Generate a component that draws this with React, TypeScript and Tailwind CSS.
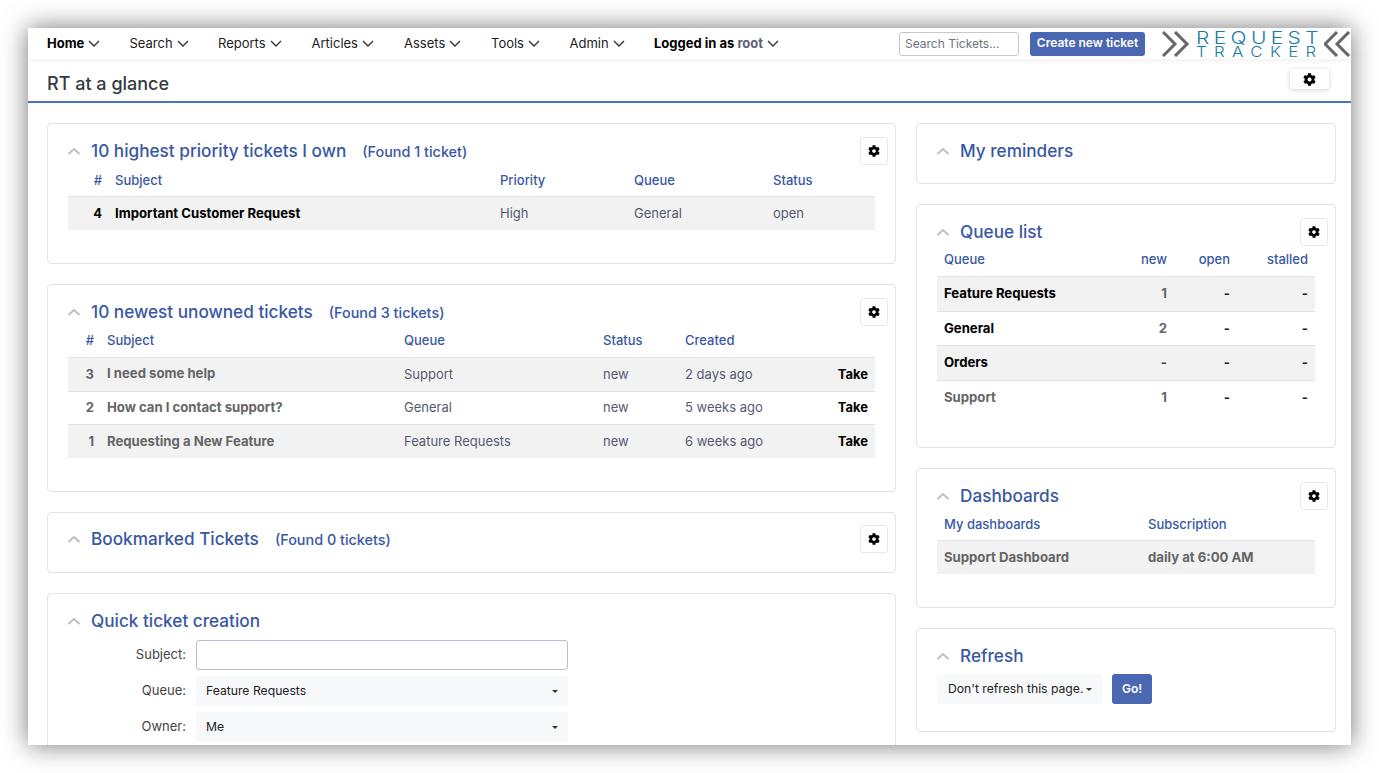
import React from "react";
import { FaCog } from "react-icons/fa";

const Caret = ({ c = "#000" }: { c?: string }) => (
  <svg width="6" height="3" viewBox="0 0 6 3" className="inline-block shrink-0"><path d="M0 0h6L3 3z" fill={c} /></svg>
);
const Chev = () => (
  <svg width="12" height="7" viewBox="0 0 12 7" fill="none" stroke="#333" strokeWidth="1.4" className="ml-[4px]"><path d="M1 1l5 5 5-5" /></svg>
);
const Up = () => (
  <svg width="12" height="7" viewBox="0 0 12 7" fill="none" stroke="#bdc0c8" strokeWidth="2"><path d="M0.5 6l5.5-5 5.5 5" /></svg>
);
const Gear = () => (
  <button className="flex h-[28px] w-[28px] items-center justify-center rounded-[3px] border border-[#e6e8ee] bg-white text-black">
    <FaCog className="h-[12px] w-[12px]" />
  </button>
);
const Card = ({ title, found, gear, raised, className, children }: { title: string; found?: string; gear?: boolean; raised?: boolean; className: string; children?: React.ReactNode }) => (
  <section className={"relative flex flex-col rounded-[4px] border border-[#dfe3ec] bg-white px-[20px] " + className}>
    <div className={(raised ? "h-[52px] " : "h-[54px] ") + "-mb-[7px] flex shrink-0 items-center"}>
      <Up />
      <h2 className="ml-[11px] text-[17.2px] font-medium leading-[24px] text-[#3858a3]">{title}</h2>
      {found && <span className="relative top-[1px] ml-[16px] text-[14.4px] font-medium text-[#3858a3]">{found}</span>}
    </div>
    {gear && <div className={(raised ? "top-[12px] " : "top-[13px] ") + "absolute right-[7px]"}><Gear /></div>}
    {children}
  </section>
);
const Cell = ({ className, children }: { className?: string; children?: React.ReactNode }) => <div className={className}>{children}</div>;

export default function App() {
  return (
    <div className="h-[773px] w-[1379px] overflow-hidden bg-white pl-[28px] pt-[28px] text-[13px] text-[#555b6e]" style={{ fontFamily: "Inter, sans-serif" }}>
      <div className="h-[717px] w-[1323px] overflow-hidden bg-white shadow-[0_0_24px_rgba(0,0,0,0.55)]">
        <nav className="relative z-10 flex h-[31px] items-center bg-white pl-[19px] text-[13px] text-[#222] shadow-[0_1px_6px_rgba(0,0,0,0.08)]">
          <span className="flex w-[82.5px] items-center font-bold text-black">Home<Chev /></span>
          <span className="flex w-[88.5px] items-center">Search<Chev /></span>
          <span className="flex w-[93.5px] items-center">Reports<Chev /></span>
          <span className="flex w-[92.5px] items-center">Articles<Chev /></span>
          <span className="flex w-[87px] items-center">Assets<Chev /></span>
          <span className="flex w-[78.5px] items-center">Tools<Chev /></span>
          <span className="flex w-[84.5px] items-center">Admin<Chev /></span>
          <span className="flex items-center font-bold text-black">Logged in as&nbsp;<span className="text-[#5c6278]">root</span><Chev /></span>
          <div className="ml-auto flex h-[24px] w-[120px] items-center rounded-[3px] border border-[#c3c7d3] bg-white px-[5px] text-[12px] text-[#6c757d]">Search Tickets...</div>
          <button className="ml-[11px] h-[24px] w-[115px] rounded-[3px] bg-[#4a67b1] pb-[1px] text-[12px] font-semibold text-white">Create new ticket</button>
          <div className="ml-[17px] flex h-[31px] w-[189px] shrink-0 items-center">
            <svg width="28" height="26" viewBox="0 0 28 26" fill="none" stroke="#666" strokeWidth="3" className="shrink-0"><path d="M1 1l12 12L1 25M13 1l12 12-12 12" /></svg>
            <div className="ml-[6px] w-[122px] shrink-0 whitespace-nowrap font-light text-[#1c7aa8]">
              <div className="h-[14px] origin-left scale-x-[1.2] text-[17.5px] leading-[14px] tracking-[3.65px]">REQUEST</div>
              <div className="mt-[1px] h-[11px] origin-left scale-x-[1.2] text-[14px] leading-[11px] tracking-[6.15px]">TRACKER</div>
            </div>
            <svg width="28" height="26" viewBox="0 0 28 26" fill="none" stroke="#666" strokeWidth="3" className="ml-[6px] shrink-0"><path d="M13 1L1 13l12 12M25 1L13 13l12 12" /></svg>
          </div>
        </nav>
        <header className="relative flex h-[44px] items-center border-b-2 border-[#4a72c4] pl-[19px] text-[18px] font-medium text-[#343a40]">
          <span className="relative top-[3px]">RT at a glance</span>
          <button className="absolute right-[22px] top-[10px] flex h-[20px] w-[39px] items-center justify-center rounded-b-[3px] bg-white text-black shadow-[0_1px_5px_rgba(40,50,80,0.22)]"><FaCog className="h-[13px] w-[13px]" /></button>
        </header>
        <main className="flex items-start gap-[20px] pl-[19px] pt-[20px]">
          <div className="flex w-[849px] shrink-0 flex-col gap-[20px]">
            <Card title="10 highest priority tickets I own" found="(Found 1 ticket)" gear className="h-[141px]">
              <div className="grid h-[18px] grid-cols-[47px_385px_134px_139px_1fr] items-center font-medium text-[#3858a3]">
                <Cell className="pr-[13px] text-right">#</Cell><Cell>Subject</Cell><Cell>Priority</Cell><Cell>Queue</Cell><Cell>Status</Cell>
              </div>
              <div className="mt-[7px] grid h-[34px] grid-cols-[47px_385px_134px_139px_1fr] items-center border-t border-[#dfe3ec] bg-[#f2f2f2]">
                <Cell className="pr-[13px] text-right font-bold text-black">4</Cell><Cell className="text-[13.15px] font-bold text-black">Important Customer Request</Cell><Cell>High</Cell><Cell>General</Cell><Cell>open</Cell>
              </div>
            </Card>
            <Card title="10 newest unowned tickets" found="(Found 3 tickets)" gear className="h-[208px]">
              <div className="-mt-[1px] grid h-[18px] grid-cols-[39px_297px_199px_82px_1fr] items-center font-medium text-[#3858a3]">
                <Cell className="pr-[13px] text-right">#</Cell><Cell>Subject</Cell><Cell>Queue</Cell><Cell>Status</Cell><Cell>Created</Cell>
              </div>
              <div className="mt-[8px]">
                {[
                  ["3", "I need some help", "Support", "2 days ago", "bg-[#f2f2f2]"],
                  ["2", "How can I contact support?", "General", "5 weeks ago", "bg-white"],
                  ["1", "Requesting a New Feature", "Feature Requests", "6 weeks ago", "bg-[#f2f2f2]"],
                ].map((r) => (
                  <div key={r[0]} className={"grid h-[33.6px] grid-cols-[39px_297px_199px_82px_1fr_auto] items-center border-t border-[#dfe3ec] " + r[4]}>
                    <Cell className="pr-[13px] text-right font-bold text-[#666]">{r[0]}</Cell><Cell className="text-[13.15px] font-bold text-[#666]">{r[1]}</Cell><Cell>{r[2]}</Cell><Cell>new</Cell><Cell>{r[3]}</Cell><Cell className="pr-[7px] font-bold text-black">Take</Cell>
                  </div>
                ))}
              </div>
            </Card>
            <Card title="Bookmarked Tickets" found="(Found 0 tickets)" gear raised className="h-[61px]" />
            <Card title="Quick ticket creation" className="h-[200px]">
              <div className="-mt-[1px] flex flex-col">
                <div className="flex items-center"><span className="w-[128px] pr-[10px] text-right text-[#444]">Subject:</span><div className="h-[30px] w-[372px] rounded-[3px] border border-[#b9bfd0] bg-white" /></div>
                <div className="mt-[6px] flex items-center"><span className="w-[128px] pr-[10px] text-right text-[#444]">Queue:</span><div className="flex h-[30px] w-[372px] items-center justify-between rounded-[3px] bg-[#f7f8fa] px-[10px] text-[12.2px] text-[#222]">Feature Requests<Caret c="#333" /></div></div>
                <div className="mt-[6px] flex items-center"><span className="w-[128px] pr-[10px] text-right text-[#444]">Owner:</span><div className="flex h-[30px] w-[372px] items-center justify-between rounded-[3px] bg-[#f7f8fa] px-[10px] text-[12.2px] text-[#222]">Me<Caret c="#333" /></div></div>
              </div>
            </Card>
          </div>
          <div className="flex w-[420px] shrink-0 flex-col gap-[20px]">
            <Card title="My reminders" className="h-[61px]" />
            <Card title="Queue list" gear className="h-[244px]">
              <div className="-mt-[2px] grid h-[18px] grid-cols-[1fr_70px_63px_78px] items-center px-[7px] font-medium text-[#3858a3]">
                <Cell>Queue</Cell><Cell className="text-right">new</Cell><Cell className="text-right">open</Cell><Cell className="text-right">stalled</Cell>
              </div>
              <div className="mt-[8px]">
                {[
                  ["Feature Requests", "1", "-", "-", "bg-[#f2f2f2] text-black", "text-[#666]"],
                  ["General", "2", "-", "-", "bg-white text-black", "text-[#666]"],
                  ["Orders", "-", "-", "-", "bg-[#f2f2f2] text-black", "text-[#444]"],
                  ["Support", "1", "-", "-", "bg-white text-[#666]", "text-[#666]"],
                ].map((r) => (
                  <div key={r[0]} className={"grid h-[34.6px] grid-cols-[1fr_70px_63px_78px] items-center border-t border-[#dfe3ec] px-[7px] text-[13.15px] font-bold " + r[4]}>
                    <Cell>{r[0]}</Cell><Cell className={"text-right " + r[5]}>{r[1]}</Cell><Cell className="text-right text-[#222]">{r[2]}</Cell><Cell className="text-right text-[#222]">{r[3]}</Cell>
                  </div>
                ))}
              </div>
            </Card>
            <Card title="Dashboards" gear className="h-[140px]">
              <div className="-mt-[1px] grid h-[18px] grid-cols-[211px_1fr] items-center font-medium text-[#3858a3]">
                <Cell className="pl-[7px]">My dashboards</Cell><Cell>Subscription</Cell>
              </div>
              <div className="mt-[7px] grid h-[34px] grid-cols-[211px_1fr] items-center border-t border-[#dfe3ec] bg-[#f2f2f2] text-[13.15px] font-bold text-[#666]">
                <Cell className="pl-[7px]">Support Dashboard</Cell><Cell>daily at 6:00 AM</Cell>
              </div>
            </Card>
            <Card title="Refresh" className="h-[104px]">
              <div className="-mt-[2px] flex items-center">
                <div className="flex h-[30px] w-[165px] items-center gap-[3px] rounded-[3px] bg-[#f7f8fa] pl-[11px] text-[12.2px] text-[#222]">Don't refresh this page.<Caret c="#333" /></div>
                <button className="ml-[10px] h-[30px] w-[40px] rounded-[3px] bg-[#4a67b1] text-[12px] font-semibold text-white">Go!</button>
              </div>
            </Card>
          </div>
        </main>
      </div>
    </div>
  );
}
